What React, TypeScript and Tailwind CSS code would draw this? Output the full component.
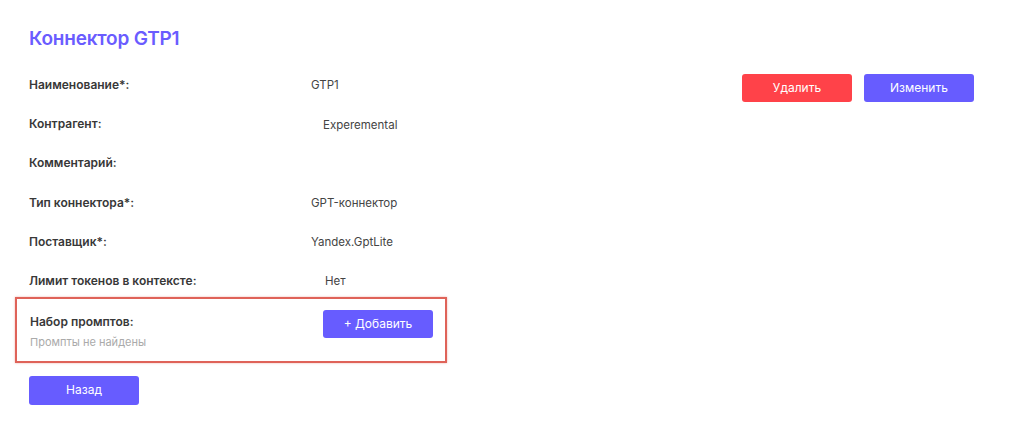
const rows: { label: string; value: string; offset: string }[] = [
  { label: "Наименование*:", value: "GTP1", offset: "ml-0" },
  { label: "Контрагент:", value: "Experemental", offset: "ml-[12px]" },
  { label: "Комментарий:", value: "", offset: "ml-0" },
  { label: "Тип коннектора*:", value: "GPT-коннектор", offset: "ml-0" },
  { label: "Поставщик*:", value: "Yandex.GptLite", offset: "ml-0" },
  { label: "Лимит токенов в контексте:", value: "Нет", offset: "ml-[14px]" },
];

export default function App() {
  return (
    <div
      className="w-[1024px] h-[433px] bg-white overflow-hidden"
      style={{ fontFamily: "Inter, 'Noto Sans', sans-serif" }}
    >
      <div className="pt-[28px] pl-[29px] pr-[50px]">
        <h1 className="text-[19px] leading-[22px] font-semibold text-[#6a5cff] tracking-[-0.2px]">
          Коннектор GTP1
        </h1>

        <div className="flex justify-between mt-[25px]">
          <div className="flex flex-col gap-[19.2px]">
            {rows.map((r) => (
              <div key={r.label} className="flex items-center h-[20px]">
                <div className="w-[282px] text-[12px] font-semibold text-[#383838]">{r.label}</div>
                <div className={`text-[11.5px] text-[#444] pt-[2px] ${r.offset}`}>{r.value}</div>
              </div>
            ))}
          </div>
          <div className="flex gap-[12px] mt-[-1px] h-[28px]">
            <button className="w-[110px] h-[28px] rounded-[3px] bg-[#ff4249] text-white text-[12px]">
              Удалить
            </button>
            <button className="w-[110px] h-[28px] rounded-[3px] bg-[#675cff] text-white text-[12px]">
              Изменить
            </button>
          </div>
        </div>
      </div>

      <div className="ml-[15px] mt-[6px] w-[432px] h-[66px] border-2 border-[#df6359] shadow-[0_0_2px_rgba(223,99,89,0.5)] flex justify-between pl-[13px] pr-[12px] pt-[11px]">
        <div className="flex flex-col pt-[4px]">
          <div className="text-[12px] font-semibold text-[#383838] leading-[15px]">Набор промптов:</div>
          <div className="text-[11px] text-[#aaa] leading-[14px] mt-[6px]">Промпты не найдены</div>
        </div>
        <button className="w-[110px] h-[28px] rounded-[3px] bg-[#675cff] text-white text-[12px]">
          + Добавить
        </button>
      </div>

      <div className="pl-[29px] mt-[13px]">
        <button className="w-[110px] h-[29px] rounded-[3px] bg-[#675cff] text-white text-[12px]">
          Назад
        </button>
      </div>
    </div>
  );
}
